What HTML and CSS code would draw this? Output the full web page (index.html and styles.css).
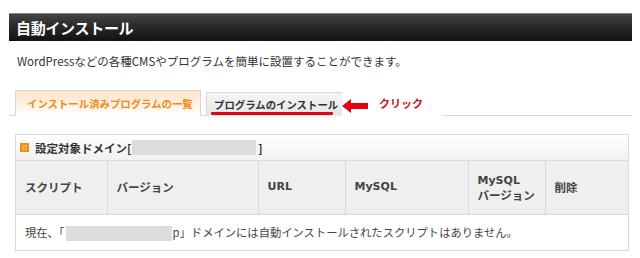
FILE: index.html
```html
<!DOCTYPE html>
<html lang="ja">
<head>
<meta charset="utf-8">
<link rel="stylesheet" href="styles.css">
</head>
<body>
<div class="page">
  <h1 class="title">自動インストール</h1>
  <p class="desc">WordPressなどの各種CMSやプログラムを簡単に設置することができます。</p>
  <div class="tabs">
    <div class="tab active">インストール済みプログラムの一覧</div>
    <div class="tab">プログラムのインストール<span class="mark"></span></div>
    <div class="note">
      <svg class="arrow" width="26" height="14" viewBox="0 0 26 14"><polygon points="0,7 9,0 9,4 26,4 26,10 9,10 9,14" fill="#e60012"/></svg>
      <span class="click">クリック</span>
    </div>
  </div>
  <div class="box">
    <div class="box-head"><span class="icon"></span>設定対象ドメイン[<span class="redact wide"></span>]</div>
    <table class="grid">
      <colgroup>
        <col style="width:91px"><col style="width:151px"><col style="width:87px"><col style="width:123px"><col style="width:77px"><col style="width:83px">
      </colgroup>
      <tr class="head">
        <th>スクリプト</th>
        <th>バージョン</th>
        <th class="latin">URL</th>
        <th class="latin">MySQL</th>
        <th><span class="latin">MySQL</span><br>バージョン</th>
        <th>削除</th>
      </tr>
      <tr class="row">
        <td colspan="6">現在、「<span class="redact short"></span>p」ドメインには自動インストールされたスクリプトはありません。</td>
      </tr>
    </table>
  </div>
</div>
</body>
</html>
```

FILE: styles.css
```css
* { box-sizing: border-box; }
html, body { margin: 0; padding: 0; background: #fff; }
body {
  font-family: "Noto Sans CJK JP", "Noto Sans", sans-serif;
  color: #333;
  width: 640px;
  height: 258px;
  overflow: hidden;
}
.page { padding: 13px 8px 0 9px; }
.title {
  margin: 0;
  height: 28px;
  padding-left: 7px;
  display: flex;
  align-items: center;
  font-size: 15px;
  font-weight: bold;
  color: #fff;
  background: linear-gradient(#444 0%, #2a2a2a 45%, #121212 100%);
  border-top: 1px solid #8a8a8a;
  letter-spacing: -0.3px;
}
.desc {
  margin: 12px 0 0 8px;
  font-size: 11.5px;
  line-height: 16px;
  color: #333;
}
.tabs {
  position: relative;
  margin-top: 22px;
  display: flex;
  align-items: flex-end;
  gap: 5px;
  height: 25px;
  padding-left: 6px;
  border-bottom: 1px solid #d8d8d8;
}
.tab {
  position: relative;
  height: 24px;
  margin-bottom: -1px;
  display: flex;
  align-items: center;
  white-space: nowrap;
  font-size: 10.4px;
  border: 1px solid #d8d8d8;
  border-bottom: none;
  background: linear-gradient(#f5f5f5, #e6e6e6);
  color: #333;
  font-weight: bold;
}
.tab.active {
  height: 26px;
  width: 186px;
  padding-left: 11px;
  color: #f08a1c;
  background: linear-gradient(#fde3c8 0%, #fff3e6 60%, #fff 100%);
}
.tab:not(.active) { width: 137px; padding-left: 7px; }
.mark {
  position: absolute;
  left: 4px;
  right: 9px;
  bottom: 1px;
  height: 3px;
  background: #e60012;
  border-radius: 1px;
}
.note {
  position: absolute;
  left: 333px;
  top: 0;
  width: 100px;
  height: 26px;
  background: #fff;
  display: flex;
  align-items: center;
  gap: 11px;
}
.arrow { display: block; margin-top: 4px; }
.click {
  color: #c8161d;
  font-size: 11px;
  font-weight: bold;
  margin-top: -2px;
}
.box {
  margin: 18px 0 0 6px;
  width: 614px;
  border: 1px solid #dadada;
}
.box-head {
  height: 26px;
  display: flex;
  align-items: center;
  padding-left: 4px;
  font-size: 11.5px;
  font-weight: bold;
  color: #333;
  background: linear-gradient(#fff, #f1f1f1);
  border-bottom: 1px solid #dadada;
}
.icon {
  width: 9px;
  height: 9px;
  background: #f29a2e;
  border: 2px solid #f08c1a;
  box-shadow: inset 0 0 0 1px #f7b868;
  margin-right: 6px;
}
.redact {
  display: inline-block;
  background: #dcdcdc;
  vertical-align: middle;
}
.redact.wide { width: 124px; height: 15px; margin: 0 2px 0 1px; }
.redact.short { width: 106px; height: 15px; margin: 0 1px; }
.grid {
  width: 612px;
  border-collapse: collapse;
  table-layout: fixed;
}
.grid th {
  height: 53px;
  text-align: left;
  padding: 0 0 0 9px;
  font-size: 11.5px;
  line-height: 14px;
  font-weight: bold;
  color: #444;
  background: #efefef;
  border-right: 1px solid #dadada;
  border-bottom: 1px solid #dadada;
}
.grid th:last-child { border-right: none; }
.grid th .latin, .grid th.latin { font-family: "DejaVu Sans", sans-serif; font-size: 11px; }
.grid td {
  height: 36px;
  padding: 0 0 0 9px;
  font-size: 11.3px;
  color: #444;
}
```
